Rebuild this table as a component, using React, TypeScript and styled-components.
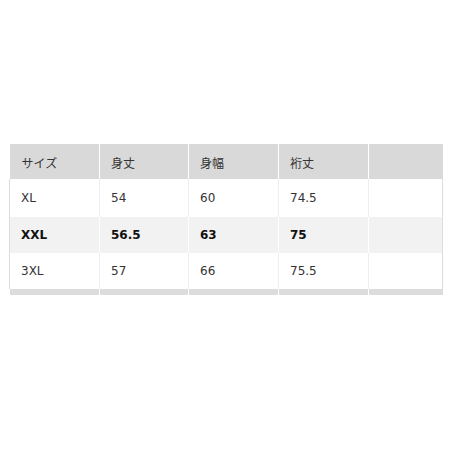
import React from "react";
import styled, { createGlobalStyle } from "styled-components";

const Global = createGlobalStyle`
  html, body { margin: 0; padding: 0; background: #fff; }
  body { font-family: "DejaVu Sans", "Noto Sans CJK JP", sans-serif; }
`;

const Page = styled.div`
  width: 450px;
  height: 450px;
  box-sizing: border-box;
  padding: 144px 8px 0 9px;
`;

const Table = styled.table`
  width: 433px;
  table-layout: fixed;
  border-collapse: collapse;
  border-spacing: 0;
  font-size: 12px;
  color: #333;
`;

const HeadCell = styled.th<{ $first?: boolean }>`
  height: 35px;
  padding: 2px 0 0 ${(p) => (p.$first ? 12 : 11)}px;
  box-sizing: border-box;
  background: #d9d9d9;
  border-right: 1px solid #fff;
  text-align: left;
  font-weight: normal;
  font-family: "Noto Sans CJK JP", "DejaVu Sans", sans-serif;
  font-size: 12px;
  color: #333;
  vertical-align: middle;
  &:last-child { border-right: none; }
`;

const Row = styled.tr<{ $h: number }>`
  height: ${(p) => p.$h}px;
`;

const Cell = styled.td<{ $alt?: boolean; $bold?: boolean }>`
  padding: 0 0 0 11px;
  background: ${(p) => (p.$alt ? "#f2f2f2" : "#fff")};
  border-right: 1px solid ${(p) => (p.$alt ? "#fff" : "#eeeeee")};
  font-weight: ${(p) => (p.$bold ? "bold" : "normal")};
  color: ${(p) => (p.$bold ? "#111" : "#333")};
  vertical-align: middle;
  white-space: nowrap;
  &:first-child { border-left: 1px solid #dcdcdc; padding-left: 11px; }
  &:last-child { border-right: 1px solid #dcdcdc; }
`;

const StripCell = styled.td`
  height: 6px;
  padding: 0;
  background: #dcdcdc;
  border-right: 1px solid #fff;
  &:last-child { border-right: none; }
`;

const widths = [90, 89, 90, 90, 74];

const rows = [
  { cells: ["XL", "54", "60", "74.5", ""], h: 38 },
  { cells: ["XXL", "56.5", "63", "75", ""], h: 36, alt: true, bold: true },
  { cells: ["3XL", "57", "66", "75.5", ""], h: 36 },
];

export default function App() {
  return (
    <>
      <Global />
      <Page>
        <Table>
          <colgroup>
            {widths.map((w, i) => (
              <col key={i} style={{ width: w }} />
            ))}
          </colgroup>
          <thead>
            <tr>
              <HeadCell $first>サイズ</HeadCell>
              <HeadCell>身丈</HeadCell>
              <HeadCell>身幅</HeadCell>
              <HeadCell>裄丈</HeadCell>
              <HeadCell></HeadCell>
            </tr>
          </thead>
          <tbody>
            {rows.map((r, i) => (
              <Row key={i} $h={r.h}>
                {r.cells.map((c, j) => (
                  <Cell key={j} $alt={r.alt} $bold={r.bold}>
                    {c}
                  </Cell>
                ))}
              </Row>
            ))}
            <tr>
              {widths.map((_, i) => (
                <StripCell key={i} />
              ))}
            </tr>
          </tbody>
        </Table>
      </Page>
    </>
  );
}
